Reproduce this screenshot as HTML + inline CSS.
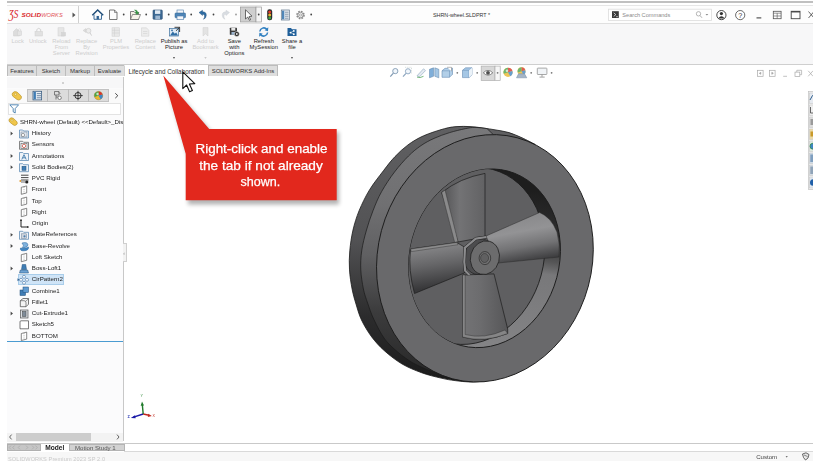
<!DOCTYPE html>
<html><head><meta charset="utf-8">
<style>
html,body{margin:0;padding:0;background:#fff;}
body{width:813px;height:461px;position:relative;overflow:hidden;font-family:"Liberation Sans",sans-serif;color:#333;}
.abs{position:absolute;}
#topline{left:6.5px;top:1px;width:807px;height:1.9px;background:#c0c0c0;}
#titlebar{left:7px;top:5px;width:806px;height:18px;background:#fdfdfd;border-top:1px solid #e6e6e6;}
#ribbon{left:7px;top:23px;width:806px;height:42px;background:#f7f7f8;border-top:1px solid #e0e0e0;}
#tabrow{left:7px;top:64px;width:806px;height:11px;background:#fff;border-top:1.5px solid #cfcfcf;}
.tab{position:absolute;top:65px;height:10px;background:#dedede;border:1px solid #bcbcbc;border-bottom:none;font-size:6px;line-height:11px;text-align:center;color:#333;box-sizing:border-box;height:11px;white-space:nowrap;}
.tab.act{background:#fff;border-color:#d0d0d0;border-top-color:#fff;font-size:6.35px}
.rl{position:absolute;font-size:5.8px;line-height:6.45px;text-align:center;color:#cdcdcd;white-space:nowrap;transform:translateX(-50%);}
.rl.on{color:#222;}
.tt{position:absolute;font-size:6.15px;line-height:8px;white-space:nowrap;color:#222;}
#panel{left:7px;top:77px;width:116px;height:364px;background:#fbfbfc;border-right:1px solid #c8c8c8;}
.dot{position:absolute;width:2px;height:2px;background:#444;border-radius:1px;}
</style></head><body><div id="stage" style="position:absolute;left:0;top:0;width:813px;height:461px;filter:blur(0.45px)">
<div class="abs" id="topline"></div>
<div class="abs" id="titlebar"></div>
<div class="abs" id="ribbon"></div>
<div class="abs" id="tabrow"></div>
<div class="abs" id="panel"></div>
<!--UI-->
<!--UI1-->
<!-- title bar -->
<svg class="abs" style="left:0;top:0" width="813" height="80" viewBox="0 0 813 80">
<!-- logo -->
<g fill="#d9252a">
<text x="8.8" y="17.6" font-family="Liberation Serif,serif" font-style="italic" font-size="11.5" fill="#d9252a" textLength="9.5" lengthAdjust="spacingAndGlyphs">ƷS</text>
<text x="21.5" y="17.1" font-family="Liberation Sans,sans-serif" font-style="italic" font-weight="bold" font-size="6.2" textLength="19.5" lengthAdjust="spacingAndGlyphs">SOLID</text>
<text x="41.2" y="17.1" font-family="Liberation Sans,sans-serif" font-style="italic" font-size="6.2" textLength="21.5" lengthAdjust="spacingAndGlyphs" fill="#e2575b">WORKS</text>
</g>
<path d="M72.5 12.5 L75.5 15 L72.5 17.5 Z" fill="#555"/>
<line x1="78.5" y1="6" x2="78.5" y2="23" stroke="#d0d0d0" stroke-width="1"/>
<!-- home -->
<path d="M94 14.6 V19.3 H101.5 V14.6" fill="#f3f6fa" stroke="#2b5f8f" stroke-width="0.9"/><path d="M92.3 15.2 L97.7 10 L103.2 15.2" fill="none" stroke="#1f4d78" stroke-width="1.5" stroke-linejoin="miter"/><rect x="96.6" y="16" width="2.3" height="3.3" fill="#2b5f8f"/>
<!-- new doc -->
<path d="M109.5 10 L114.5 10 L117 12.5 L117 19.5 L109.5 19.5 Z" fill="#fdfdfd" stroke="#555" stroke-width="0.8"/>
<path d="M114.5 10 L114.5 12.5 L117 12.5" fill="none" stroke="#555" stroke-width="0.6"/>
<circle cx="123.7" cy="14.5" r="0.9" fill="#444"/>
<!-- open -->
<path d="M130.5 11.5 L134 11.5 L135 12.8 L138.5 12.8 L138.5 19.5 L130.5 19.5 Z" fill="#f5f2e6" stroke="#666" stroke-width="0.8"/>
<path d="M130.5 19.5 L132.5 14.5 L140.5 14.5 L138.5 19.5 Z" fill="#f7f4ea" stroke="#666" stroke-width="0.7"/>
<path d="M134.5 10 Q137.5 9.5 137.8 12.5 L139 12.3 L137 14.6 L135.4 12.6 L136.5 12.6 Q136.3 11 134.5 10 Z" fill="#2f9a3b" stroke="#1e7a2a" stroke-width="0.4"/>
<circle cx="146.2" cy="14.5" r="0.9" fill="#444"/>
<!-- save -->
<rect x="153" y="10" width="9.3" height="9.3" rx="0.8" fill="#3d6a94" stroke="#2b4f73" stroke-width="0.6"/>
<rect x="155" y="10.3" width="5.3" height="3.6" fill="#dfe9f3"/>
<rect x="155.3" y="15.6" width="4.7" height="3.7" fill="#9fb9d3"/>
<circle cx="168.7" cy="14.5" r="0.9" fill="#444"/>
<!-- print -->
<rect x="177" y="10" width="6.5" height="3.5" fill="#f4f6f9" stroke="#4a7aa8" stroke-width="0.6"/>
<rect x="175" y="13" width="10.5" height="4.8" rx="0.8" fill="#4f86b8" stroke="#2b5f8f" stroke-width="0.5"/>
<rect x="177" y="16" width="6.5" height="3.7" fill="#f4f6f9" stroke="#4a7aa8" stroke-width="0.6"/>
<circle cx="191.2" cy="14.5" r="0.9" fill="#444"/>
<!-- undo -->
<path d="M199 12.5 L202.5 10.3 L202.5 11.8 Q206.5 11.8 206.3 15.5 Q206.2 18.2 203.5 19.3 Q205 17.3 204.5 15.6 Q204 14 202.5 14.2 L202.5 15.5 Z" fill="#2f6da3" stroke="#1f4d78" stroke-width="0.4"/>
<circle cx="213.5" cy="14.5" r="0.9" fill="#444"/>
<!-- redo -->
<path d="M229.5 12.5 L226 10.3 L226 11.8 Q222 11.8 222.2 15.5 Q222.3 18.2 225 19.3 Q223.5 17.3 224 15.6 Q224.5 14 226 14.2 L226 15.5 Z" fill="#d9dde2" stroke="#c8ccd2" stroke-width="0.4"/>
<circle cx="236" cy="14.5" r="0.9" fill="#999"/>
<!-- select -->
<rect x="240.5" y="7" width="15.5" height="15" fill="#cfcfcf" stroke="#9a9a9a" stroke-width="0.7"/>
<rect x="256" y="7" width="5.5" height="15" fill="#f4f4f4" stroke="#9a9a9a" stroke-width="0.7"/>
<path d="M245.5 9.8 L245.5 19 L247.8 17 L249.4 20.3 L250.6 19.7 L249.1 16.5 L252 16.2 Z" fill="#fff" stroke="#333" stroke-width="0.7"/>
<circle cx="258.7" cy="14.5" r="0.9" fill="#444"/>
<!-- traffic light -->
<rect x="267.2" y="9.3" width="5" height="11" rx="2.3" fill="#2a2a2a"/>
<circle cx="269.7" cy="12" r="1.5" fill="#e03a2a"/><circle cx="269.7" cy="15" r="1.5" fill="#e7b52c"/><circle cx="269.7" cy="18" r="1.5" fill="#3aa14a"/>
<!-- options list -->
<rect x="281.3" y="10" width="8" height="10" fill="#eef2f6" stroke="#5a6f86" stroke-width="0.7"/>
<rect x="282" y="10.7" width="2.3" height="8.6" fill="#4f86b8"/>
<path d="M285 12.2 H288.5 M285 14.2 H288.5 M285 16.2 H288.5 M285 18.2 H288.5" stroke="#6b7f96" stroke-width="0.8"/>
<!-- gear -->
<circle cx="300.5" cy="15" r="3.4" fill="none" stroke="#8a8a8a" stroke-width="1.8" stroke-dasharray="1.6 1.07"/>
<circle cx="300.5" cy="15" r="2.7" fill="#fdfdfd" stroke="#8a8a8a" stroke-width="0.9"/>
<circle cx="300.5" cy="15" r="1.1" fill="none" stroke="#8a8a8a" stroke-width="0.7"/>
<circle cx="311.2" cy="14.5" r="0.9" fill="#444"/>
<!-- doc title -->
<text x="433" y="17" font-family="Liberation Sans,sans-serif" font-size="5.6" fill="#333" textLength="57" lengthAdjust="spacingAndGlyphs">SHRN-wheel.SLDPRT *</text>
<!-- search box -->
<rect x="608.5" y="9.2" width="103" height="11.4" fill="#fff" stroke="#dcdcdc" stroke-width="0.8"/>
<rect x="612" y="11.2" width="6.8" height="6.8" fill="#3a3a3a"/>
<path d="M613.7 12.8 L615.8 14.6 L613.7 16.4 M616.2 16.7 H617.8" stroke="#fff" stroke-width="0.7" fill="none"/>
<text x="622.3" y="17" font-family="Liberation Sans,sans-serif" font-size="5.6" fill="#8a8a8a" textLength="48" lengthAdjust="spacingAndGlyphs">Search Commands</text>
<circle cx="698.5" cy="13.8" r="2.2" fill="none" stroke="#a5a5a5" stroke-width="0.8"/><path d="M700 15.5 L702 17.8" stroke="#a5a5a5" stroke-width="0.9"/>
<path d="M705.5 14 L708.3 14 L706.9 15.6 Z" fill="#888"/>
<!-- user -->
<circle cx="721.4" cy="15.1" r="4.6" fill="#fff" stroke="#333" stroke-width="0.9"/>
<circle cx="721.4" cy="13.6" r="1.6" fill="#333"/><path d="M718.2 18.4 Q721.4 14 724.6 18.4 Z" fill="#333"/>
<!-- help -->
<circle cx="740.2" cy="15.1" r="4.6" fill="#fff" stroke="#444" stroke-width="0.8"/>
<text x="738.2" y="17.7" font-family="Liberation Sans,sans-serif" font-size="7.2" fill="#333">?</text>
<!-- window controls -->
<path d="M756.5 17.9 H761.3" stroke="#444" stroke-width="1.1"/>
<rect x="773.3" y="11.3" width="7.8" height="7.4" fill="none" stroke="#555" stroke-width="0.8"/><path d="M773.5 13.2 H781 M777.2 13.2 V18.5 M773.5 16 H781" stroke="#555" stroke-width="0.6"/>
<rect x="791.2" y="11.3" width="8.8" height="7.4" fill="none" stroke="#444" stroke-width="0.9"/><path d="M791.2 11.8 H800" stroke="#444" stroke-width="1.3"/>
<path d="M808.5 11.5 L814 18 M814 11.5 L808.5 18" stroke="#444" stroke-width="0.8"/>
</svg>
<!--/UI1-->
<!--UI2-->
<!-- ribbon icons -->
<svg class="abs" style="left:0;top:23px" width="320" height="42" viewBox="0 23 320 42">
<g fill="#dcdcdc" stroke="#cfcfcf" stroke-width="0.5">
<!-- lock -->
<path d="M13.5 31.5 L16.5 28.5 L19.5 31.5 V36 H13.5 Z"/><rect x="17.5" y="31" width="4" height="4.5" fill="#e4e4e4"/><path d="M18.3 31 V29.5 Q19.5 28 20.7 29.5 V31" fill="none"/>
<!-- unlock -->
<rect x="35" y="31.5" width="7.5" height="4.5" fill="#e1e1e1"/><path d="M36.8 31.5 V29.5 Q38.8 27 40.7 29.5 V31.5" fill="none" stroke-width="0.9"/>
<!-- reload -->
<rect x="58" y="27.8" width="6" height="8.2" fill="#e6e6e6"/><rect x="61.5" y="32.5" width="4" height="3.5" fill="#d6d6d6"/>
<!-- replace by revision -->
<path d="M83 30.5 L86 28.5 L86 32.5 Z"/><circle cx="88.5" cy="30.8" r="2.4" fill="#ececec" stroke-width="0.8"/><path d="M90 32.8 L91.6 35.6" stroke-width="1"/>
<!-- PLM -->
<rect x="112" y="27.8" width="7.5" height="8.4" fill="#e8e8e8"/><path d="M114.5 27.8 V36.2 M112 30.3 H119.5 M112 33 H119.5" fill="none"/>
<!-- replace content -->
<path d="M141.5 27.8 H146.5 L148.8 30.3 V36.2 H141.5 Z" fill="#ececec"/><path d="M143 31.5 H147.3 M143 33.5 H147.3" fill="none"/>
<!-- bookmark -->
<path d="M203 27.6 H208 V36 L205.5 33.8 L203 36 Z" fill="#e3e3e3"/>
</g>
<!-- publish as picture -->
<rect x="169.5" y="28.5" width="9" height="7.5" fill="#dfeaf4" stroke="#3d6f9f" stroke-width="0.7"/>
<path d="M170 35.5 L172.8 31.5 L174.8 33.8 L176.2 32.5 L178 35.5 Z" fill="#2f6da3"/>
<circle cx="172" cy="30.3" r="0.9" fill="#2f6da3"/>
<path d="M174.5 27.3 H179.6 V32 M179.6 27.3 L176 30.8" stroke="#2b2b2b" stroke-width="0.9" fill="none"/>
<!-- save with options -->
<rect x="229.8" y="27.8" width="7.2" height="7" rx="0.5" fill="#3a3a3a"/>
<rect x="231.3" y="28" width="4" height="2.6" fill="#e8e8e8"/><rect x="231.5" y="32" width="3.5" height="2.8" fill="#9ab4cf"/>
<circle cx="236.8" cy="34" r="2.5" fill="#2b2b2b" stroke="#f1f1f1" stroke-width="0.5"/><circle cx="236.8" cy="34" r="0.9" fill="#f1f1f1"/>
<!-- refresh -->
<path d="M259.8 31.5 A4 4 0 0 1 266.8 29.3" fill="none" stroke="#2f7fc0" stroke-width="1.5"/><path d="M268.3 27.3 L268 31.2 L264.6 30.2 Z" fill="#2f7fc0"/>
<path d="M267.6 32.5 A4 4 0 0 1 260.6 34.7" fill="none" stroke="#2f7fc0" stroke-width="1.5"/><path d="M259.1 36.7 L259.4 32.8 L262.8 33.8 Z" fill="#2f7fc0"/>
<!-- share -->
<path d="M287.5 28 H291 L292 29.2 H296.5 V36 H287.5 Z" fill="#1f5f99"/>
<circle cx="290.5" cy="32.6" r="0.95" fill="#fff"/><circle cx="293.8" cy="30.9" r="0.95" fill="#fff"/><circle cx="293.8" cy="34.3" r="0.95" fill="#fff"/><path d="M293.8 30.9 L290.5 32.6 L293.8 34.3" stroke="#fff" stroke-width="0.5" fill="none"/>
<!-- dropdown arrows -->
<path d="M172.8 57.3 H175.2 L174 58.7 Z M290.8 57.3 H293.2 L292 58.7 Z" fill="#333"/>
<path d="M204.3 57.3 H206.7 L205.5 58.7 Z" fill="#bbb"/>
</svg>
<div class="rl" style="left:17.7px;top:37.5px">Lock</div>
<div class="rl" style="left:37.8px;top:37.5px">Unlock</div>
<div class="rl" style="left:61.4px;top:37.5px">Reload<br>From<br>Server</div>
<div class="rl" style="left:86.6px;top:37.5px">Replace<br>By<br>Revision</div>
<div class="rl" style="left:116px;top:37.5px">PLM<br>Properties</div>
<div class="rl" style="left:145.3px;top:37.5px">Replace<br>Content</div>
<div class="rl on" style="left:174px;top:37.5px">Publish as<br>Picture</div>
<div class="rl" style="left:205.5px;top:37.5px">Add to<br>Bookmark</div>
<div class="rl on" style="left:234.3px;top:37.5px">Save<br>with<br>Options</div>
<div class="rl on" style="left:263.8px;top:37.5px">Refresh<br>MySession</div>
<div class="rl on" style="left:292px;top:37.5px">Share a<br>file</div>
<!-- command manager tabs -->
<div class="tab" style="left:7px;width:30px">Features</div>
<div class="tab" style="left:36px;width:30px">Sketch</div>
<div class="tab" style="left:65px;width:30px">Markup</div>
<div class="tab" style="left:94px;width:31px">Evaluate</div>
<div class="tab act" style="left:124px;width:85px">Lifecycle and Collaboration</div>
<div class="tab" style="left:208px;width:70px">SOLIDWORKS Add-Ins</div>
<!--/UI2-->
<!--UI3-->
<!-- feature manager panel chrome -->
<div class="abs" style="left:7px;top:77px;width:116px;height:11px;background:#f7f7f8"></div>
<div class="abs" style="left:62px;top:81.5px;width:2.4px;height:2.4px;border-radius:2px;background:#c4c4c4"></div>
<div class="abs" style="left:7px;top:88.5px;width:116px;height:14px;background:#fafafa"></div>
<div class="abs" style="left:27px;top:88.5px;width:82px;height:13.5px;background:#dcdcdc;border:1px solid #c2c2c2;box-sizing:border-box"></div>
<div class="abs" style="left:47px;top:89px;width:1px;height:13px;background:#bdbdbd"></div>
<div class="abs" style="left:67.5px;top:89px;width:1px;height:13px;background:#bdbdbd"></div>
<div class="abs" style="left:88px;top:89px;width:1px;height:13px;background:#bdbdbd"></div>
<div class="abs" style="left:8px;top:103px;width:112.5px;height:11.5px;background:#fff;border:1px solid #e3e3e3;box-sizing:border-box"></div>
<div class="tt" style="left:20px;top:117.5px;width:102.5px;overflow:hidden;letter-spacing:-0.05px">SHRN-wheel (Default) &lt;&lt;Default&gt;_Display</div>
<div class="abs" style="left:7px;top:340.5px;width:115.5px;height:1.3px;background:#4a9bd1"></div>
<!-- panel splitter handle -->
<div class="abs" style="left:122.5px;top:243px;width:4px;height:19px;background:#f2f2f2;border:1px solid #cfcfcf;border-left:none;box-sizing:border-box"></div>
<div class="abs" style="left:123.3px;top:249.5px;font-size:5px;line-height:6px;color:#888">‹</div>
<!-- bottom scrollbar -->
<div class="abs" style="left:7px;top:432.5px;width:116px;height:9px;background:#f3f3f3"></div>
<div class="abs" style="left:15.5px;top:433.3px;width:75px;height:7.4px;background:#cdcdcd"></div>


<!-- bottom tabs -->
<div class="abs" style="left:7px;top:443.4px;width:806px;height:1px;background:#c9c9c9"></div>
<div class="abs" style="left:124px;top:450.6px;width:689px;height:1px;background:#d9d9d9"></div>
<div class="abs" style="left:7px;top:452px;width:806px;height:9px;background:#f7f7f7"></div>
<div class="abs" style="left:7px;top:443.6px;width:33.5px;height:7.8px;background:#c6c6c6;border:0.5px solid #b0b0b0;box-sizing:border-box"></div>
<div class="abs" style="left:40.5px;top:443.6px;width:28.5px;height:8px;background:#fff;font-size:6.6px;line-height:8px;font-weight:bold;color:#222;text-align:center">Model</div>
<div class="abs" style="left:69px;top:443.6px;width:55.5px;height:7.8px;background:#d2d2d2;border:0.6px solid #b4b4b4;box-sizing:border-box;font-size:6.1px;line-height:6.4px;color:#555;padding-left:5px;white-space:nowrap">Motion Study 1</div>
<div class="abs" style="left:8px;top:455.5px;font-size:5.6px;line-height:7px;color:#c9c9c9;white-space:nowrap;letter-spacing:0.1px">SOLIDWORKS Premium 2023 SP 2.0</div>
<div class="abs" style="left:756.2px;top:452.6px;font-size:6.1px;line-height:7px;color:#444;white-space:nowrap">Custom</div>
<svg class="abs" style="left:780px;top:451px" width="33" height="10" viewBox="780 451 33 10"><path d="M785.6 456.3 H787.8 L786.7 457.6 Z" fill="#444"/>
<path d="M802.5 454 L806 452.8 L809 454.5 L808 458 L805.5 460 L803.5 457.5 Z" fill="#e8e8e8" stroke="#444" stroke-width="0.8"/><path d="M804 455 L807.5 456.5" stroke="#444" stroke-width="0.6"/></svg>
<div class="tt" style="left:31.8px;top:129.2px">History</div>
<div class="tt" style="left:31.8px;top:140.4px">Sensors</div>
<div class="tt" style="left:31.8px;top:151.7px">Annotations</div>
<div class="tt" style="left:31.8px;top:162.9px">Solid Bodies(2)</div>
<div class="tt" style="left:31.8px;top:174.2px">PVC Rigid</div>
<div class="tt" style="left:31.8px;top:185.4px">Front</div>
<div class="tt" style="left:31.8px;top:196.7px">Top</div>
<div class="tt" style="left:31.8px;top:207.9px">Right</div>
<div class="tt" style="left:31.8px;top:219.2px">Origin</div>
<div class="tt" style="left:31.8px;top:230.4px">MateReferences</div>
<div class="tt" style="left:31.8px;top:241.7px">Base-Revolve</div>
<div class="tt" style="left:31.8px;top:252.9px">Loft Sketch</div>
<div class="tt" style="left:31.8px;top:264.2px">Boss-Loft1</div>
<div class="abs" style="left:18px;top:274.4px;width:46px;height:10.6px;background:#cfe4f7;border:0.5px solid #a9cdea;box-sizing:border-box"></div>
<div class="tt" style="left:31.8px;top:275.4px">CirPattern2</div>
<div class="tt" style="left:31.8px;top:286.7px">Combine1</div>
<div class="tt" style="left:31.8px;top:297.9px">Fillet1</div>
<div class="tt" style="left:31.8px;top:309.2px">Cut-Extrude1</div>
<div class="tt" style="left:31.8px;top:320.4px">Sketch5</div>
<div class="tt" style="left:31.8px;top:331.7px">BOTTOM</div>
<svg class="abs" style="left:0;top:0" width="130" height="461" viewBox="0 0 130 461">
<path d="M10.6 131.6 L13 133.5 L10.6 135.4 Z" fill="#4a4a4a"/>
<path d="M19.5 130.0 H22.7 L23.7 131.0 H28.5 V138.0 H19.5 Z" fill="#eef3f8" stroke="#4f7fae" stroke-width="0.7"/><rect x="21.0" y="132.0" width="6" height="5" fill="#dfe6ee" stroke="#6b7f96" stroke-width="0.5"/><circle cx="23.0" cy="135.0" r="1.6" fill="#fff" stroke="#555" stroke-width="0.5"/>
<path d="M19.5 141.3 H22.7 L23.7 142.3 H28.5 V149.3 H19.5 Z" fill="#eef3f8" stroke="#555" stroke-width="0.7"/><rect x="21.0" y="143.3" width="6" height="5" fill="#fff" stroke="#444" stroke-width="0.5"/><circle cx="24.0" cy="145.9" r="1.7" fill="none" stroke="#c0392b" stroke-width="0.7"/>
<path d="M10.6 154.1 L13 156.0 L10.6 157.9 Z" fill="#4a4a4a"/>
<path d="M19.5 152.5 H22.7 L23.7 153.5 H28.5 V160.5 H19.5 Z" fill="#eef3f8" stroke="#4f7fae" stroke-width="0.7"/><path d="M21.8 159.5 L24.0 154.7 L26.2 159.5 M22.7 157.8 H25.3" fill="none" stroke="#2f6da3" stroke-width="0.8"/>
<path d="M10.6 165.3 L13 167.2 L10.6 169.1 Z" fill="#4a4a4a"/>
<path d="M19.5 163.7 H22.7 L23.7 164.7 H28.5 V171.7 H19.5 Z" fill="#eef3f8" stroke="#4f7fae" stroke-width="0.7"/><rect x="22.0" y="166.29999999999998" width="4" height="4" fill="#3f7db5" stroke="#1f4d78" stroke-width="0.5"/>
<path d="M21.0 175.2 H28.5 M21.0 177.6 H28.5 M21.0 180.0 H28.5" stroke="#333" stroke-width="0.9"/><circle cx="20.3" cy="181.0" r="0.9" fill="#e39a2b"/><circle cx="26.8" cy="182.0" r="1.6" fill="#222"/><path d="M21.0 182.0 H25.5" stroke="#333" stroke-width="0.7"/>
<path d="M21.3 187.3 L26.7 185.9 V192.9 L21.3 194.3 Z" fill="#fff" stroke="#555" stroke-width="0.7"/><path d="M24.0 186.8 V193.5" stroke="#777" stroke-width="0.5" stroke-dasharray="1.2 1"/>
<path d="M21.3 198.5 L26.7 197.1 V204.1 L21.3 205.5 Z" fill="#fff" stroke="#555" stroke-width="0.7"/><path d="M24.0 198.0 V204.7" stroke="#777" stroke-width="0.5" stroke-dasharray="1.2 1"/>
<path d="M21.3 209.7 L26.7 208.29999999999998 V215.29999999999998 L21.3 216.7 Z" fill="#fff" stroke="#555" stroke-width="0.7"/><path d="M24.0 209.2 V215.89999999999998" stroke="#777" stroke-width="0.5" stroke-dasharray="1.2 1"/>
<path d="M21.0 219.5 V227.0 H28.5" fill="none" stroke="#222" stroke-width="1"/><path d="M20.0 221.0 L21.0 219.0 L22.0 221.0 Z M27.1 226.0 L29.0 227.0 L27.1 228.0 Z" fill="#222"/>
<path d="M10.6 232.9 L13 234.8 L10.6 236.7 Z" fill="#4a4a4a"/>
<path d="M19.5 231.3 H22.7 L23.7 232.3 H28.5 V239.3 H19.5 Z" fill="#eef3f8" stroke="#4f7fae" stroke-width="0.7"/><rect x="21.5" y="233.8" width="5" height="4.5" fill="#cfd6de" stroke="#6b7f96" stroke-width="0.5"/><circle cx="24.5" cy="236.3" r="1.1" fill="#4f7fae"/>
<path d="M10.6 244.1 L13 246.0 L10.6 247.9 Z" fill="#4a4a4a"/>
<path d="M20.5 248.0 Q19.5 251.0 24.0 250.8 Q29.0 250.5 28.5 247.0 Q25.5 249.0 20.5 248.0 Z" fill="#3f86c4" stroke="#1f5f99" stroke-width="0.5"/><path d="M22.0 243.0 Q27.5 241.5 28.0 245.0 Q27.5 247.5 22.5 248.0 Q24.5 245.5 22.0 243.0 Z" fill="#7fb2de" stroke="#1f5f99" stroke-width="0.5"/>
<path d="M21.3 254.7 L26.7 253.29999999999998 V260.3 L21.3 261.7 Z" fill="#fff" stroke="#555" stroke-width="0.7"/><path d="M24.0 254.2 V260.9" stroke="#777" stroke-width="0.5" stroke-dasharray="1.2 1"/>
<path d="M10.6 266.6 L13 268.5 L10.6 270.4 Z" fill="#4a4a4a"/>
<path d="M22.3 264.5 H25.7 L26.5 269.5 H21.5 Z" fill="#3f7db5" stroke="#1f4d78" stroke-width="0.5"/><path d="M20.3 270.0 H27.7 L28.5 273.0 H19.5 Z" fill="#6fa3d2" stroke="#1f4d78" stroke-width="0.5"/>
<circle cx="24" cy="276.8" r="1.5" fill="#fff" stroke="#3f6f9f" stroke-width="0.6"/><circle cx="27" cy="279.8" r="1.5" fill="#fff" stroke="#3f6f9f" stroke-width="0.6"/><circle cx="24" cy="282.8" r="1.5" fill="#fff" stroke="#3f6f9f" stroke-width="0.6"/><circle cx="21" cy="279.8" r="1.5" fill="#fff" stroke="#3f6f9f" stroke-width="0.6"/><path d="M17.5 278.3 L19.5 279.8 L17.5 281.3 Z" fill="#2f5f8f"/>
<rect x="20.0" y="290.0" width="5.5" height="5.5" fill="#3f7db5" stroke="#1f4d78" stroke-width="0.5"/><rect x="23.0" y="287.0" width="5.5" height="5.5" fill="#5f9ad0" stroke="#1f4d78" stroke-width="0.5"/>
<path d="M20.3 300.7 L23.0 298.5 H28.5 V304.2 L26.0 306.7 H20.3 Z" fill="#f4f4f4" stroke="#444" stroke-width="0.7"/><path d="M20.3 300.7 H24.0 Q26.0 300.7 26.0 302.7 V306.7 M26.0 301.2 L28.5 298.7" fill="none" stroke="#444" stroke-width="0.6"/>
<path d="M10.6 311.6 L13 313.5 L10.6 315.4 Z" fill="#4a4a4a"/>
<rect x="20.5" y="310.0" width="7.5" height="8" fill="#d9dde2" stroke="#555" stroke-width="0.7"/><rect x="22.5" y="311.5" width="3.5" height="5" fill="#7f8c99" stroke="#444" stroke-width="0.5"/>
<path d="M20.0 321.8 Q20.0 320.8 21.0 320.8 H28.5 V328.8 H20.0 Z" fill="#fff" stroke="#444" stroke-width="0.7"/>
<path d="M21.3 333.5 L26.7 332.1 V339.1 L21.3 340.5 Z" fill="#fff" stroke="#555" stroke-width="0.7"/><path d="M24.0 333.0 V339.7" stroke="#777" stroke-width="0.5" stroke-dasharray="1.2 1"/>
<!-- panel tab icons -->
<path d="M12.5 93 Q14.5 90.8 17 92 L21.2 96 Q22.2 98.2 20.2 99.6 Q18.2 100.6 16.6 99.2 L12.8 96.2 Q11.6 94.6 12.5 93 Z" fill="#f0c64a" stroke="#b08a1e" stroke-width="0.6"/>
<circle cx="15.5" cy="94.3" r="1.1" fill="#fbe9a8" stroke="#b08a1e" stroke-width="0.4"/>
<rect x="33" y="91.3" width="8.6" height="8.6" fill="#e9eff5" stroke="#3d5f82" stroke-width="0.8"/><rect x="33.6" y="91.9" width="2.3" height="7.4" fill="#3f7db5"/><path d="M36.8 93.6 H41 M36.8 95.7 H41 M36.8 97.8 H41" stroke="#3d5f82" stroke-width="0.7"/>
<path d="M54.5 91.5 H59 V95 H54.5 Z M56 95 V99.5 M56 97 H58" fill="none" stroke="#555" stroke-width="0.7"/><circle cx="59.6" cy="97.8" r="1.7" fill="#fff" stroke="#555" stroke-width="0.7"/><path d="M58.5 92 L60.5 94" stroke="#555" stroke-width="0.6"/>
<circle cx="78" cy="95.6" r="3.1" fill="none" stroke="#222" stroke-width="0.9"/><path d="M78 90.8 V100.4 M73.2 95.6 H82.8" stroke="#222" stroke-width="0.8"/>
<circle cx="98.5" cy="95.6" r="4.2" fill="#e9b830" stroke="#8a6d1a" stroke-width="0.4"/><path d="M98.5 95.6 L98.5 91.4 A4.2 4.2 0 0 1 102.5 94.4 Z" fill="#d8352a"/><path d="M98.5 95.6 L102.5 94.4 A4.2 4.2 0 0 1 100.6 99.2 Z" fill="#3f86c4"/><path d="M98.5 95.6 L98.5 91.4 A4.2 4.2 0 0 0 94.6 97 Z" fill="#4aa34a"/><circle cx="97.5" cy="94" r="1.2" fill="#fff" opacity="0.7"/>
<path d="M115.3 93.3 L117.8 95.7 L115.3 98.1" fill="none" stroke="#333" stroke-width="0.9"/>
<!-- filter -->
<path d="M9.8 104.8 H18.6 L15.2 108.6 V113 L13.2 111.8 V108.6 Z" fill="#fff" stroke="#2f6da3" stroke-width="0.8"/>
<!-- top part icon -->
<path d="M9.3 119 Q11 117 13.2 118.2 L17 121.8 Q18 123.8 16.2 125 Q14.4 126 13 124.7 L9.6 122 Q8.5 120.5 9.3 119 Z" fill="#f0c64a" stroke="#b08a1e" stroke-width="0.6"/><circle cx="12" cy="120.2" r="1" fill="#fbe9a8" stroke="#b08a1e" stroke-width="0.4"/>
<path d="M11.6 434.6 L9.6 437 L11.6 439.4 M117 434.6 L119 437 L117 439.4" fill="none" stroke="#555" stroke-width="0.9"/>
<!-- bottom nav arrows -->
<path d="M11 445.6 L9.2 447.5 L11 449.4 M14.5 445.6 L12.7 447.5 L14.5 449.4 M20 445.6 L18.2 447.5 L20 449.4 M26 445.6 L27.8 447.5 L26 449.4 M32 445.6 L33.8 447.5 L32 449.4 M35.5 445.6 L37.3 447.5 L35.5 449.4" fill="none" stroke="#a9a9a9" stroke-width="0.7"/>

</svg>
<!--/UI3-->
<!--UI4-->
<!-- heads-up view toolbar + doc controls + task pane + triad -->
<svg class="abs" style="left:0;top:0" width="813" height="461" viewBox="0 0 813 461">
<g id="hud" opacity="0.8" transform="translate(0 0.8)">
<!-- zoom to fit -->
<circle cx="395.3" cy="70.3" r="2.6" fill="#eef4fa" stroke="#5f7f9f" stroke-width="0.9"/><path d="M393.4 72.4 L390.3 75.8" stroke="#5f7f9f" stroke-width="1.2"/>
<!-- zoom area -->
<circle cx="408" cy="70.5" r="2.6" fill="#eef4fa" stroke="#6f8faf" stroke-width="0.9"/><path d="M406 72.6 L403 75.8" stroke="#6f8faf" stroke-width="1.2"/><path d="M405 66.5 H411.5 V73" fill="none" stroke="#9aa" stroke-width="0.5" stroke-dasharray="1 0.8"/>
<!-- previous view -->
<path d="M417 75 L423.5 68 L425.5 69.8 L419.5 76 Z" fill="#dfe6ee" stroke="#6f8faf" stroke-width="0.6"/><path d="M417 76.3 Q420 77.6 423.5 75.5" fill="none" stroke="#3f9a4a" stroke-width="0.9"/>
<!-- section view -->
<path d="M429.5 68.5 L433.5 67 V75.5 L429.5 77 Z" fill="#5f9ad0" stroke="#2f5f8f" stroke-width="0.5"/><path d="M434.8 67 L438.8 68.5 V77 L434.8 75.5 Z" fill="#8fb9df" stroke="#2f5f8f" stroke-width="0.5"/>
<!-- view orientation -->
<path d="M442 70 L445 67.5 H452.5 V73.5 L449.5 76.5 H442 Z" fill="#9fc3e3" stroke="#3f6f9f" stroke-width="0.6"/><path d="M442 70 H449.5 V76.5 M449.5 70 L452.5 67.5" fill="none" stroke="#3f6f9f" stroke-width="0.5"/><path d="M447 66.5 L451.5 66.5 L451.5 70.5" fill="#fff" stroke="#555" stroke-width="0.5"/>
<circle cx="457.3" cy="72" r="0.9" fill="#555"/>
<!-- display style -->
<path d="M462.5 69.5 L465.5 67 H472 V74 L469 76.8 H462.5 Z" fill="#8fb9df" stroke="#3f6f9f" stroke-width="0.6"/><path d="M462.5 69.5 H469 V76.8 M469 69.5 L472 67" fill="none" stroke="#3f6f9f" stroke-width="0.5"/><path d="M469 69.5 L472 67 V74 L469 76.8 Z" fill="#e8f0f8"/>
<circle cx="477.2" cy="72" r="0.9" fill="#555"/>
<!-- hide/show -->
<rect x="481.2" y="65.3" width="13.8" height="14.4" fill="#cfcfcf" stroke="#9a9a9a" stroke-width="0.7"/><rect x="495" y="65.3" width="5.2" height="14.4" fill="#f4f4f4" stroke="#9a9a9a" stroke-width="0.7"/>
<path d="M483.3 72 Q488 67.2 492.8 72 Q488 76.8 483.3 72 Z" fill="#fff" stroke="#333" stroke-width="0.7"/><circle cx="488" cy="72" r="1.9" fill="#222"/>
<circle cx="497.6" cy="72" r="0.9" fill="#555"/>
<!-- appearance -->
<circle cx="508" cy="71.5" r="4.6" fill="#e9b830"/><path d="M508 71.5 L508 66.9 A4.6 4.6 0 0 1 512.4 70.2 Z" fill="#d8352a"/><path d="M508 71.5 L512.4 70.2 A4.6 4.6 0 0 1 510.3 75.5 Z" fill="#3f86c4"/><path d="M508 71.5 L508 66.9 A4.6 4.6 0 0 0 503.7 73 Z" fill="#4aa34a"/><circle cx="507" cy="70" r="1.3" fill="#fff" opacity="0.7"/>
<!-- scene -->
<circle cx="521.5" cy="70.5" r="4" fill="#e9b830"/><path d="M521.5 70.5 L521.5 66.5 A4 4 0 0 1 525.3 69.4 Z" fill="#d8352a"/><path d="M521.5 70.5 L525.3 69.4 A4 4 0 0 1 523.5 74 Z" fill="#3f86c4"/><path d="M521.5 70.5 L521.5 66.5 A4 4 0 0 0 517.8 71.8 Z" fill="#4aa34a"/>
<path d="M516.5 77 L518.5 73 H524.5 L526.8 77 Z" fill="#8fa3b8" stroke="#4f6f8f" stroke-width="0.5"/>
<circle cx="531.2" cy="72" r="0.9" fill="#555"/>
<!-- monitor -->
<rect x="537.3" y="67.3" width="9.6" height="6.4" rx="0.6" fill="#eef2f6" stroke="#7a7a7a" stroke-width="0.8"/><path d="M542 73.7 V76 M539.5 76.3 H544.7" stroke="#7a7a7a" stroke-width="0.9"/>
<circle cx="551.6" cy="72" r="0.9" fill="#555"/>
</g>
<!-- document window controls -->
<g fill="none" stroke="#a8a8a8" stroke-width="0.7" transform="translate(0 1.3)">
<rect x="757.5" y="69" width="5.6" height="6"/><path d="M760.8 71 L759.3 72 L760.8 73 Z" fill="#999"/>
<rect x="769.5" y="69" width="5.6" height="6"/><path d="M771.8 71 L773.3 72 L771.8 73 Z" fill="#999"/>
<path d="M783.2 75 H787"/>
<rect x="795" y="70.8" width="4.8" height="4.4"/><path d="M796.8 70.8 V69 H801.6 V73.4 H799.8"/>
<path d="M808.2 69.5 L813 75 M813 69.5 L808.2 75"/>
</g>
<!-- task pane strip -->
<rect x="808.5" y="91.5" width="6" height="98" fill="#f2f2f2" stroke="#c2c2c2" stroke-width="0.7"/>
<g stroke="#c2c2c2" stroke-width="0.5">
<rect x="809.5" y="93" width="5" height="10.5" fill="#e6eaf0"/><path d="M810 100 L812.5 95.5 L815 98" fill="none" stroke="#2f5f8f" stroke-width="1"/>
<rect x="809.5" y="105" width="5" height="10.5" fill="#eee"/><path d="M810.5 107 V113 H814" fill="none" stroke="#555" stroke-width="0.9"/>
<rect x="809.5" y="117" width="5" height="10.5" fill="#ddd"/><rect x="810.5" y="119" width="3" height="6" fill="#9a9a9a" stroke="none"/>
<rect x="809.5" y="129" width="5" height="10.5" fill="#e9d9a8"/><rect x="810.5" y="131.5" width="3" height="5" fill="#c99a2a" stroke="none"/>
<rect x="809.5" y="141" width="5" height="10.5" fill="#dfe9df"/><circle cx="813" cy="146.2" r="3" fill="#3f86c4" stroke="#2f8a4a" stroke-width="0.8"/>
<rect x="809.5" y="153" width="5" height="10.5" fill="#cfdbe6"/><rect x="810.3" y="154.5" width="4" height="7.5" fill="#7f9fbf" stroke="none"/>
<rect x="809.5" y="165" width="5" height="10.5" fill="#d6dde4"/><rect x="810.3" y="166.5" width="4" height="7.5" fill="#8fa3b8" stroke="none"/>
<rect x="809.5" y="177" width="5" height="11" fill="#dfe6ee"/><circle cx="813.3" cy="182.5" r="3.3" fill="#1f5fa8" stroke="none"/>
</g>
<!-- triad -->
<g>
<text x="140.6" y="396.8" font-family="Liberation Sans,sans-serif" font-size="3.6" fill="#2f8a3a">Y</text>
<text x="127.6" y="418" font-family="Liberation Sans,sans-serif" font-size="3.8" font-weight="bold" fill="#1f2fb0">Z</text>
<text x="152.6" y="416.5" font-family="Liberation Sans,sans-serif" font-size="3.6" fill="#c0281e">X</text>
<path d="M143.2 414 L133.5 417.2" stroke="#1a1aa8" stroke-width="1.4"/><path d="M130.8 418 L135 415.2 L135.7 418.3 Z" fill="#1a1aa8"/>
<path d="M143.2 414 L149 415.3" stroke="#c0281e" stroke-width="1.4"/><path d="M151.8 416 L147.8 417 L148.3 413.8 Z" fill="#c0281e"/>
<path d="M143.2 414 L142.3 404.5" stroke="#1f7a2a" stroke-width="1.4"/><path d="M142 401.5 L144 405.5 L140.7 405.8 Z" fill="#1f7a2a"/>
</g>
</svg>
<!--/UI4-->
<!--WHEEL-->
<svg class="abs" style="left:0;top:0" width="813" height="461" viewBox="0 0 813 461">
<defs>
<linearGradient id="gT1" x1="0" y1="126" x2="0" y2="378" gradientUnits="userSpaceOnUse">
<stop offset="0" stop-color="#606062"/><stop offset="0.45" stop-color="#525254"/><stop offset="0.75" stop-color="#2c2c2d"/><stop offset="1" stop-color="#1c1c1c"/></linearGradient>
<linearGradient id="gT2" x1="0" y1="128" x2="0" y2="382" gradientUnits="userSpaceOnUse">
<stop offset="0" stop-color="#78787a"/><stop offset="0.3" stop-color="#707072"/><stop offset="0.5" stop-color="#606062"/><stop offset="0.72" stop-color="#3c3c3d"/><stop offset="1" stop-color="#262626"/></linearGradient>
<linearGradient id="gWall" x1="520" y1="180" x2="540" y2="340" gradientUnits="userSpaceOnUse">
<stop offset="0" stop-color="#1e1e1e"/><stop offset="0.3" stop-color="#323233"/><stop offset="0.42" stop-color="#555556"/><stop offset="0.5" stop-color="#78787a"/><stop offset="1" stop-color="#848486"/></linearGradient>
<linearGradient id="gUp" x1="442" y1="0" x2="486" y2="0" gradientUnits="userSpaceOnUse">
<stop offset="0" stop-color="#525254"/><stop offset="0.4" stop-color="#737375"/><stop offset="1" stop-color="#616163"/></linearGradient>
<linearGradient id="gRight" x1="520" y1="218" x2="528" y2="262" gradientUnits="userSpaceOnUse">
<stop offset="0" stop-color="#8a8a8c"/><stop offset="0.3" stop-color="#939395"/><stop offset="0.65" stop-color="#727274"/><stop offset="1" stop-color="#3c3c3e"/></linearGradient>
<linearGradient id="gDown" x1="462" y1="0" x2="508" y2="0" gradientUnits="userSpaceOnUse">
<stop offset="0" stop-color="#747476"/><stop offset="0.4" stop-color="#6c6c6e"/><stop offset="1" stop-color="#565658"/></linearGradient>
<linearGradient id="gLeft" x1="436" y1="246" x2="442" y2="286" gradientUnits="userSpaceOnUse">
<stop offset="0" stop-color="#858587"/><stop offset="0.45" stop-color="#656567"/><stop offset="1" stop-color="#38383a"/></linearGradient>
<clipPath id="cInner"><ellipse cx="484.5" cy="258.3" rx="74.8" ry="90.3" transform="rotate(15 484.5 258.3)"/></clipPath>
</defs>
<g stroke-linejoin="round">
<!-- tread -->
<path d="M535.0 144.3 C532.8 143.2 526.3 139.8 522.0 137.8 C517.7 135.9 513.3 133.9 509.0 132.6 C504.7 131.3 500.3 130.8 496.0 130.0 C491.7 129.2 487.3 128.6 483.0 128.0 C478.7 127.4 474.3 126.8 470.0 126.6 C465.7 126.4 461.3 126.2 457.0 126.6 C452.7 126.9 450.0 127.2 444.4 128.7 C438.8 130.2 429.7 133.1 423.6 135.8 C417.5 138.5 412.8 141.4 408.0 144.9 C403.2 148.4 399.1 152.3 395.0 156.6 C390.9 160.9 387.6 165.2 383.4 170.8 C379.1 176.4 373.6 183.2 369.5 189.9 C365.4 196.6 361.9 204.0 359.1 210.7 C356.4 217.4 354.6 223.3 353.0 230.0 C351.4 236.7 350.4 244.2 349.8 250.8 C349.2 257.4 349.1 263.5 349.5 269.9 C349.9 276.3 351.0 283.3 352.1 289.0 C353.2 294.7 354.4 298.8 356.0 304.0 C357.6 309.2 358.9 314.5 361.5 320.0 C364.1 325.5 367.8 331.7 371.7 336.9 C375.6 342.1 379.6 346.5 384.7 351.0 C389.8 355.5 396.0 360.4 402.1 364.0 C408.2 367.6 415.1 370.3 421.6 372.7 C428.1 375.1 435.5 376.8 441.1 378.1 C446.7 379.4 450.2 380.0 455.0 380.6 C459.8 381.2 465.0 381.9 470.0 382.0 C475.0 382.1 482.5 381.2 485.0 381.0 L520 260 Z" fill="url(#gT1)" stroke="#1a1a1a" stroke-width="0.8"/>
<path d="M487.0 128.6 C485.0 128.4 478.6 127.4 475.0 127.4 C471.4 127.4 469.4 127.8 465.2 128.7 C461.0 129.6 454.8 131.0 449.6 132.6 C444.4 134.2 438.8 136.2 434.0 138.4 C429.2 140.6 425.2 142.7 421.0 145.6 C416.8 148.5 412.9 151.6 408.5 156.0 C404.1 160.4 399.0 166.1 394.5 172.0 C390.0 177.9 385.2 185.2 381.6 191.6 C378.0 198.0 375.5 204.3 373.0 210.7 C370.5 217.1 368.4 223.3 366.5 230.0 C364.6 236.7 362.6 244.2 361.7 250.8 C360.8 257.4 360.5 263.5 360.8 269.9 C361.1 276.3 362.3 283.5 363.4 289.0 C364.5 294.5 365.9 297.9 367.6 303.0 C369.4 308.1 371.0 313.5 373.9 319.5 C376.8 325.5 380.7 333.6 384.7 339.0 C388.7 344.4 393.0 348.0 397.7 352.0 C402.4 356.0 407.2 359.6 412.9 362.9 C418.6 366.1 425.5 369.0 432.0 371.5 C438.5 374.0 448.7 376.9 452.0 378.0 L520 260 L520 160 Z" fill="url(#gT2)" stroke="#1a1a1a" stroke-width="0.7"/>
<!-- front face -->
<ellipse cx="484.9" cy="258.3" rx="107.1" ry="124.8" transform="rotate(15 484.9 258.3)" fill="#69696b" stroke="#1c1c1c" stroke-width="0.9"/>
<!-- inner opening: wall -->
<ellipse cx="484.5" cy="258.3" rx="74.8" ry="90.3" transform="rotate(15 484.5 258.3)" fill="url(#gWall)" stroke="#1c1c1c" stroke-width="0.9"/>
<g clip-path="url(#cInner)">
<!-- floor -->
<ellipse cx="469.5" cy="255.9" rx="74.2" ry="89.5" transform="rotate(15 469.5 255.9)" fill="#5f5f61" stroke="#1c1c1c" stroke-width="0.8"/>
<!-- up spoke -->
<path d="M441.7 192.5 Q460 178 485 173.4 L485 237 L458 242 Z" fill="url(#gUp)" stroke="#1c1c1c" stroke-width="0.7"/>
<path d="M441.7 192.5 L454.7 242.4 L458 241.5 L445 190 Z" fill="#8a8a8b" stroke="#2a2a2a" stroke-width="0.4"/>
<!-- left spoke -->
<path d="M410.6 249 L456.8 242.5 L464.4 247 L464.4 273 L414.5 293.5 Q408 270 410.6 249 Z" fill="url(#gLeft)" stroke="#1c1c1c" stroke-width="0.7"/>
<path d="M410.6 249 L456.8 242.5 L458 244.7 L411.3 251.6 Z" fill="#8c8c8d" stroke="#2a2a2a" stroke-width="0.4"/>
<!-- down spoke -->
<path d="M462.5 275 L494 273.9 L507.7 329 L507.7 333.5 Q484 343 462.5 337 Z" fill="url(#gDown)" stroke="#1c1c1c" stroke-width="0.7"/>
<path d="M462.5 275 L465.2 275 L465.2 334.5 Q484 339.5 505 330 L507.7 333.5 Q484 343 462.5 337 Z" fill="#858586" stroke="#2a2a2a" stroke-width="0.4"/>
<!-- right spoke -->
<path d="M486 236 L539.6 212.5 Q551 217 557 232 Q560.5 245 559 257 L498 263 Z" fill="url(#gRight)" stroke="#2a2a2a" stroke-width="0.5"/>
</g>
<!-- hub collar -->
<ellipse cx="479.4" cy="256.6" rx="15.2" ry="18" transform="rotate(15 479.4 256.6)" fill="#4c4c4e" stroke="#1c1c1c" stroke-width="0.6"/>
<path d="M486.4 237 L475.8 238.6 L465 247.6 L464.3 262 L465.2 270.8 L469.5 275" fill="none" stroke="#222" stroke-width="3.1" stroke-linejoin="round"/>
<path d="M486.4 237 L475.8 238.6 L465 247.6 L464.3 262 L465.2 270.8 L469.5 275" fill="none" stroke="#8b8b8d" stroke-width="2.2" stroke-linejoin="round"/>
<!-- hub -->
<ellipse cx="484.9" cy="257.7" rx="14.4" ry="17" transform="rotate(15 484.9 257.7)" fill="#6c6c6d" stroke="#1c1c1c" stroke-width="0.7"/>
<ellipse cx="484.9" cy="258.1" rx="5.8" ry="6.5" fill="#727273" stroke="#1c1c1c" stroke-width="0.6"/>
<ellipse cx="484.6" cy="258" rx="4" ry="4.5" fill="#606061" stroke="#2a2a2a" stroke-width="0.5"/>
</g>
</svg>
<!--/WHEEL-->
<!--CALLOUT-->
<!--UI5-->
<svg class="abs" style="left:0;top:0;overflow:visible" width="813" height="461" viewBox="0 0 813 461">
<defs><filter id="sh" x="-10%" y="-10%" width="130%" height="130%"><feGaussianBlur stdDeviation="2"/></filter></defs>
<path d="M166 80 L211.5 132 H339 V204.5 H188 V158 Z" fill="#000" opacity="0.3" filter="url(#sh)"/>
<path d="M163.3 75.6 L209.2 129 H336.7 V200.3 H185.7 V153.7 Z" fill="#e2281d"/>
<g font-family="Liberation Sans,sans-serif" font-size="13.4" fill="#fff" stroke="#fff" stroke-width="0.25" text-anchor="middle">
<text x="261.5" y="153.4" textLength="132" lengthAdjust="spacingAndGlyphs">Right-click and enable</text>
<text x="261" y="169.9" textLength="123.5" lengthAdjust="spacingAndGlyphs">the tab if not already</text>
<text x="260.3" y="186.3" textLength="39.8" lengthAdjust="spacingAndGlyphs">shown.</text>
</g>
<!-- mouse cursor -->
<path d="M182.8 71.8 L182.8 88.6 L186.6 85 L189.6 91.8 L192.4 90.6 L189.4 84 L194.8 83.6 Z" fill="#fff" stroke="#111" stroke-width="1.1" stroke-linejoin="round"/>
</svg>
<!--/UI5-->
</div></body></html>
